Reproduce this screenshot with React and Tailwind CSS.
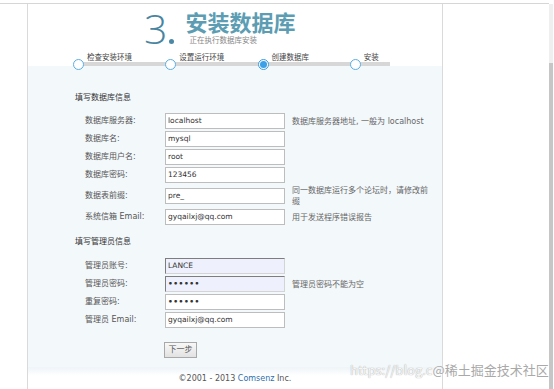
const steps = [
  { label: '检查安装环境', state: 'done' },
  { label: '设置运行环境', state: 'done' },
  { label: '创建数据库', state: 'current' },
  { label: '安装', state: 'todo' },
];

const dbRows = [
  { label: '数据库服务器:', value: 'localhost', hint: '数据库服务器地址, 一般为 localhost' },
  { label: '数据库名:', value: 'mysql' },
  { label: '数据库用户名:', value: 'root' },
  { label: '数据库密码:', value: '123456' },
  { label: '数据表前缀:', value: 'pre_', hint: '同一数据库运行多个论坛时，请修改前缀', tall: true },
  { label: '系统信箱 Email:', value: 'gyqailxj@qq.com', hint: '用于发送程序错误报告' },
];

const adminRows = [
  { label: '管理员账号:', value: 'LANCE', filled: true },
  { label: '管理员密码:', value: '••••••', filled: true, dots: true, hint: '管理员密码不能为空' },
  { label: '重复密码:', value: '••••••', dots: true },
  { label: '管理员 Email:', value: 'gyqailxj@qq.com' },
];

function StepDot({ state }) {
  if (state === 'current') {
    return (
      <div className="mt-[6px] w-[11px] h-[11px] rounded-full border border-[#3b9be0] bg-white flex items-center justify-center shrink-0 relative z-10">
        <div className="w-[7px] h-[7px] rounded-full bg-[#3d9fe6]" />
      </div>
    );
  }
  return (
    <div className="mt-[6px] w-[11px] h-[11px] rounded-full border-[1.5px] border-[#5aaee3] bg-white shrink-0 relative z-10" />
  );
}

function FormRow({ row }) {
  return (
    <div className={`flex items-center py-[1px] ${row.tall ? 'min-h-[24px]' : 'min-h-[18px]'}`}>
      <div className="w-[80px] text-[8px] text-[#555]">{row.label}</div>
      <div
        className={`w-[120px] h-[16px] border flex items-center px-[2px] text-[7.5px] text-[#333] ${
          row.filled
            ? 'bg-[#eef1fd] border-[#d4d4d4] border-t-[#7d7d7d] border-l-[#7d7d7d]'
            : 'bg-white border-[#bdbdbd]'
        } ${row.dots ? 'tracking-[0.5px] text-[6px] font-bold' : ''}`}
      >
        {row.value}
      </div>
      {row.hint && (
        <div className="ml-[7px] w-[140px] text-[8px] leading-[11px] text-[#666]">{row.hint}</div>
      )}
    </div>
  );
}

export default function App() {
  return (
    <div className="w-[554px] h-[389px] bg-white relative overflow-hidden font-['DejaVu_Sans','Noto_Sans_CJK_SC',sans-serif]">
      <div className="h-[3px]" />
      <div className="flex h-[386px] border-t border-[#d6d6d6] mr-[5px]">
        <div className="w-[27px] shrink-0" />
        <div className="w-[416px] shrink-0 border-l border-r border-[#dadada] flex flex-col bg-[linear-gradient(to_bottom,#ffffff_62px,#f3f8fb_62px)]">
          {/* title */}
          <div className="flex items-start pl-[116px] pt-[1px] h-[48px]">
            <div className="flex items-end h-[46px] font-['Open_Sans',sans-serif] font-light">
              <span className="text-[41px] leading-[46px] text-[#4785a0]">3</span>
              <span className="ml-[2px] mb-[7px] w-[5px] h-[5px] rounded-full bg-[#4a88a6]" />
            </div>
            <div className="ml-[11px] mt-[3px]">
              <div className="text-[22px] leading-[27px] font-bold text-[#5c9db3] font-['Noto_Sans_CJK_SC',sans-serif]">安装数据库</div>
              <div className="mt-[1px] ml-[4px] text-[7.5px] leading-[9px] text-[#888]">正在执行数据库安装</div>
            </div>
          </div>

          {/* steps */}
          <div className="relative flex pl-[45px] h-[23px] pt-[1px]">
            <div className="absolute left-[50px] top-[10px] w-[312px] h-[4px] bg-[#d7d7d7]" />
            {steps.map((s, i) => (
              <div key={i} className="flex items-start w-[104px]">
                <StepDot state={s.state} />
                <div className="ml-[3px] text-[7.5px] leading-[9px] text-[#444]">{s.label}</div>
              </div>
            ))}
          </div>

          {/* body */}
          <div className="flex-1 pl-[47px]">
            <div className="mt-[17px] text-[8px] leading-[12px] text-[#333]">填写数据库信息</div>
            <div className="mt-[8px] ml-[10px]">
              {dbRows.map((r, i) => (
                <FormRow key={i} row={r} />
              ))}
            </div>

            <div className="mt-[10px] text-[8px] leading-[12px] text-[#333]">填写管理员信息</div>
            <div className="mt-[9px] ml-[10px]">
              {adminRows.map((r, i) => (
                <FormRow key={i} row={r} />
              ))}
            </div>

            <button className="mt-[13px] ml-[89px] w-[33px] h-[16px] border border-[#a9a9a9] bg-[linear-gradient(to_bottom,#f8f8f8,#e2e2e2)] text-[8px] text-[#555] flex items-center justify-center">
              下一步
            </button>
          </div>

          {/* footer */}
          <div className="h-[22px] bg-[linear-gradient(to_bottom,#eef4f8,#ffffff_40%)] flex items-center justify-center text-[8px] text-[#555] pt-[2px]">
            ©2001 - 2013&nbsp;<span className="text-[#2d6fae]">Comsenz</span>&nbsp;Inc.
          </div>
        </div>
      </div>

      {/* scrollbar */}
      <div className="absolute right-[1px] top-[4px] w-[4px] h-[385px] flex flex-col">
        <div className="h-[59px] bg-[#efefef]" />
        <div className="flex-1 bg-[#c6c6c6]" />
      </div>

      {/* watermark */}
      <div className="absolute left-[350px] top-[362px] text-[13px] leading-[16px] font-['Noto_Sans_CJK_SC',sans-serif] whitespace-nowrap">
        <span className="text-[#f6f6f6] [text-shadow:0_0_1px_#8f8f8f]">https://blog.c</span>
        <span className="text-[#a9a9a9] [text-shadow:0_0_1px_#ffffff]">@稀土掘金技术社区</span>
      </div>
    </div>
  );
}
